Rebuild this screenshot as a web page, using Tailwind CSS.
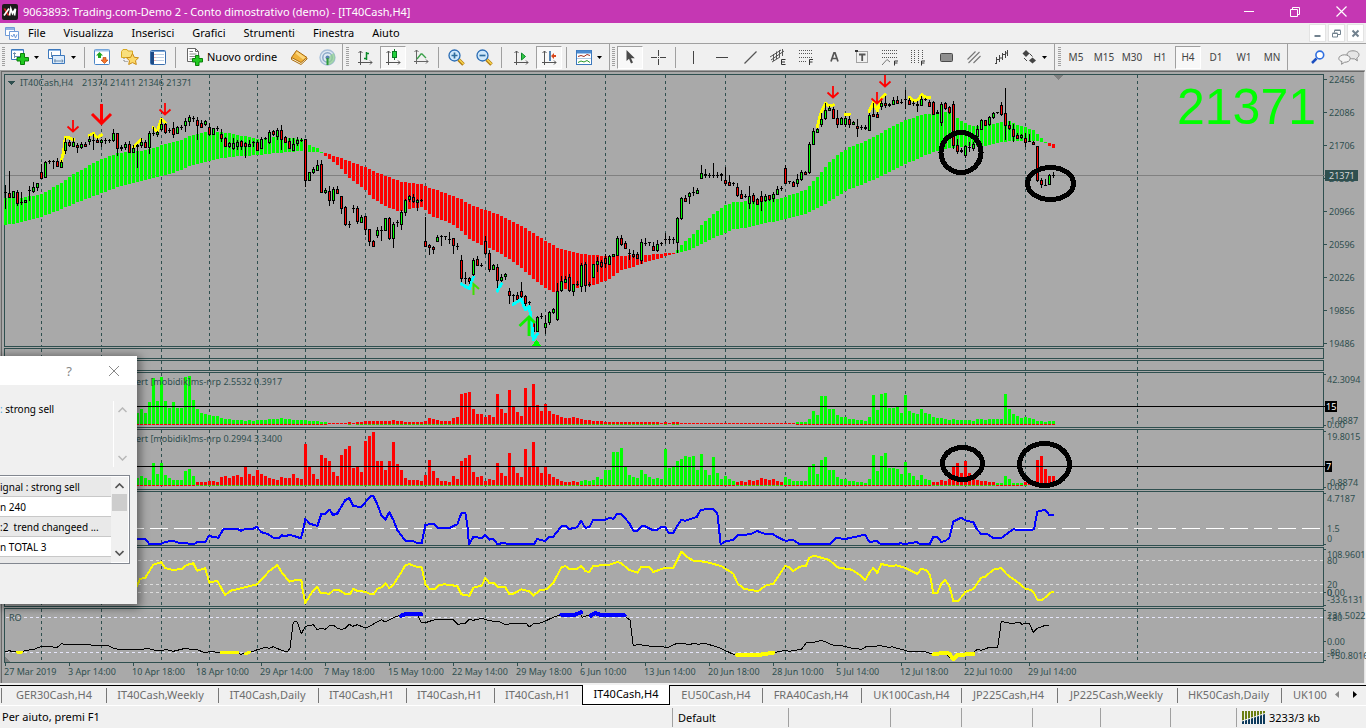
<!DOCTYPE html>
<html lang="it">
<head>
<meta charset="utf-8">
<title>9063893: Trading.com-Demo 2 - Conto dimostrativo (demo) - [IT40Cash,H4]</title>
<script src="https://cdn.jsdelivr.net/npm/@tailwindcss/browser@4"></script>
</head>
<body class="flex h-screen flex-col overflow-hidden bg-[#f0f0f0] font-['Noto_Sans','Open_Sans',sans-serif] text-[11px] leading-[16px] text-black">

<header class="flex h-[23px] shrink-0 items-center bg-[#c537b3] pl-[2px] text-white">
  <svg width="16" height="16" viewBox="0 0 16 16" aria-hidden="true"><rect width="16" height="16" rx="2" fill="#1b1b1b"/><path d="M1.500 4.500H3.500L7.500 11.500H5.500Z" fill="#e02020"/><path d="M7 4.500L2 11.500M7.500 11.500L8.800 4.800L10.500 9.500L13.500 4.800L12.500 11.500" stroke="#fff" stroke-width="1.700" fill="none"/></svg>
  <h1 class="ml-[5px] flex-1 whitespace-nowrap">9063893: Trading.com-Demo 2 - Conto dimostrativo (demo) - [IT40Cash,H4]</h1>
  <button aria-label="Riduci a icona" class="flex h-full w-[46px] items-center justify-center"><svg width="10" height="10" viewBox="0 0 10 10"><path d="M0 4.500H10" stroke="#fff"/></svg></button>
  <button aria-label="Ripristina" class="flex h-full w-[46px] items-center justify-center"><svg width="10" height="10" viewBox="0 0 10 10" fill="none" stroke="#fff"><path d="M.5 2.500H7.500V9.500H.5ZM2.500 2.500V.5H9.500V7.500H7.500"/></svg></button>
  <button aria-label="Chiudi" class="mr-[2px] flex h-full w-[46px] items-center justify-center"><svg width="11" height="11" viewBox="0 0 11 11"><path d="M.5 .5L10.500 10.500M10.500 .5L.5 10.500" stroke="#fff" stroke-width="1.200"/></svg></button>
</header>

<nav class="flex h-[20px] shrink-0 items-center pl-[5px]">
  <svg width="14" height="14" viewBox="0 0 14 14" aria-hidden="true" fill="#fff" stroke="#6f9bd8"><path d="M.5 1.500H9.500V9.500H.5Z"/><path d="M1 3H9" stroke-width="1.500"/><path d="M4.500 5.500H13.500V13.500H4.500Z"/><path d="M6 9L7.500 11L9 8L10.500 12L12 8.500" fill="none"/></svg>
  <button class="px-[9px]">File</button>
  <button class="px-[9px]">Visualizza</button>
  <button class="px-[9px]">Inserisci</button>
  <button class="px-[9px]">Grafici</button>
  <button class="px-[9px]">Strumenti</button>
  <button class="px-[9px]">Finestra</button>
  <button class="px-[9px]">Aiuto</button>
  <div class="ml-auto mr-[2px] flex gap-[2px]">
    <button aria-label="Riduci grafico" class="flex h-[18px] w-[17px] items-center justify-center border border-[#e3e3e3] bg-white"><svg width="9" height="9" viewBox="0 0 9 9"><path d="M1.500 7H7.500" stroke="#72828f" stroke-width="2"/></svg></button>
    <button aria-label="Ripristina grafico" class="flex h-[18px] w-[17px] items-center justify-center border border-[#e3e3e3] bg-white"><svg width="9" height="9" viewBox="0 0 9 9" fill="none" stroke="#72828f"><path d="M.5 4.500H5.500V8H.5ZM.5 4H5.500M2.500 3.500V1.500H8.500V5.500H6M2.500 1H8.500"/></svg></button>
    <button aria-label="Chiudi grafico" class="flex h-[18px] w-[17px] items-center justify-center border border-[#e3e3e3] bg-white"><svg width="9" height="9" viewBox="0 0 9 9"><path d="M1.500 1.500L7.500 7.500M7.500 1.500L1.500 7.500" stroke="#72828f" stroke-width="2"/></svg></button>
  </div>
</nav>

<div role="toolbar" aria-label="Strumenti" class="flex h-[27px] shrink-0 border-t border-[#a0a0a0]">
  <!-- standard -->
  <div class="flex h-full w-[343px] shrink-0 items-center border-r border-[#a0a0a0] pl-[2px]">
    <svg width="5" height="20" viewBox="0 0 5 20" aria-hidden="true"><path d="M1.500 0V20" stroke="#a0a0a0" stroke-width="3" stroke-dasharray="1 1"/></svg>
    <button aria-label="Nuovo grafico" class="flex w-[37px] items-center gap-[5px] pl-[4px]"><svg width="18" height="16" viewBox="0 0 18 16"><path d="M.5 .5H12.500V10.500H.5Z" fill="#fff" stroke="#3c78bc"/><path d="M1 1.500H12" stroke="#8ab6e6"/><path d="M3.500 4V9M2 5L3.500 3.500L5 5M3 7.500H10" stroke="#6a8cae" fill="none"/><path d="M9.500 4.500H13.500V8.500H17.500V12H13.500V15.500H9.500V12H6V8.500H9.500Z" fill="#1fc91f" stroke="#0a7f0a"/></svg><svg width="5" height="3" viewBox="0 0 5 3"><path d="M0 0H5L2.500 3Z"/></svg></button>
    <button aria-label="Profili" class="flex w-[37px] items-center gap-[5px] pl-[4px]"><svg width="18" height="16" viewBox="0 0 18 16"><path d="M.5 .5H12.500V9.500H.5Z" fill="#fff" stroke="#3c78bc"/><path d="M1 1.500H12" stroke="#8ab6e6"/><path d="M3.500 3V8M3 6.500H10" stroke="#6a8cae" fill="none"/><path d="M4.500 6.500H16.500V14.500H4.500Z" fill="#dcebfa" stroke="#3c78bc"/><path d="M6 12H15M7 10V13.500M14 10.500L15 12L14 13.500" stroke="#6a8cae" fill="none"/></svg><svg width="5" height="3" viewBox="0 0 5 3"><path d="M0 0H5L2.500 3Z"/></svg></button>
    <i class="mx-[3px] h-[21px] w-px bg-[#a0a0a0]"></i>
    <button aria-label="Market Watch" class="flex w-[28px] justify-center"><svg width="16" height="16" viewBox="0 0 16 16"><rect x=".5" y=".5" width="15" height="15" rx="1" fill="#fff" stroke="#4a86c8"/><path d="M1 1.500H15" stroke="#9cc3ea" stroke-width="2"/><path d="M5.500 3L9 6.500H7V9H4V6.500H2Z" fill="#1da51d"/><path d="M10.500 14.500L14 11H12V8.500H9V11H7Z" fill="#f4762c" stroke="#b33a00" stroke-width=".6"/></svg></button>
    <button aria-label="Navigatore" class="flex w-[28px] justify-center"><svg width="18" height="16" viewBox="0 0 18 16"><path d="M.5 2.500L2 .5H6L7 2H11.500V8.500H.5Z" fill="#f8df7c" stroke="#d8a820"/><path d="M3 9V12.500H7" stroke="#777" stroke-dasharray="1 1" fill="none"/><path d="M11.500 4.500L13.300 8.300L17.500 8.800L14.500 11.700L15.300 15.500L11.500 13.600L7.700 15.500L8.500 11.700L5.500 8.800L9.700 8.300Z" fill="#fbd96a" stroke="#c98a12"/></svg></button>
    <button aria-label="Terminale" class="flex w-[28px] justify-center"><svg width="16" height="15" viewBox="0 0 16 15"><rect x=".5" y=".5" width="15" height="14" rx="1" fill="#fff" stroke="#3a6fae"/><path d="M1 1.500H15" stroke="#7ba7d8"/><path d="M2.500 2V14" stroke="#1c4a86" stroke-width="3"/><path d="M6 4.500H14M6 7.500H14M6 10.500H14" stroke="#b9cde4"/><path d="M4.500 4.500H5.500M4.500 7.500H5.500M4.500 10.500H5.500" stroke="#d06060"/></svg></button>
    <i class="mx-[3px] h-[21px] w-px bg-[#a0a0a0]"></i>
    <button class="flex w-[106px] items-center gap-[3px] pl-[8px] whitespace-nowrap"><svg width="17" height="18" viewBox="0 0 17 18"><path d="M.5 .5H8.500L11.500 3.500V13.500H.5Z" fill="#fff" stroke="#666"/><path d="M8.500 .5V3.500H11.500" fill="none" stroke="#666"/><path d="M2.500 3.500H6M2.500 6H9.500M2.500 8.500H9.500M2.500 11H6" stroke="#888"/><path d="M8.500 7.500H12V10.500H15.500V14H12V17.500H8.500V14H5.500V10.500H8.500Z" fill="#1fc91f" stroke="#0a7f0a"/></svg><span>Nuovo ordine</span></button>
    <button aria-label="MetaEditor" class="flex w-[28px] justify-center"><svg width="17" height="15" viewBox="0 0 17 15"><path d="M.5 7.500V9.500L10 14.500L16 9V8" fill="#fff3cf" stroke="#a86a10"/><path d="M5.500 .5L16 7.500L10 12.500L.5 7.500Z" fill="#f0b23a" stroke="#a86a10"/><path d="M6 1.500L14.500 7.500L12 9.500L4.500 3.500Z" fill="#fbd67c"/></svg></button>
    <button aria-label="Segnali" class="flex w-[28px] justify-center"><svg width="17" height="17" viewBox="0 0 17 17" fill="none"><circle cx="8.500" cy="8.500" r="8" fill="#dfe9f3"/><circle cx="8.500" cy="8.500" r="7.500" stroke="#a8bfd8" stroke-width="1.300"/><circle cx="8.500" cy="8.500" r="4.700" stroke="#8aa8c8" stroke-width="1.500"/><path d="M8.500 8.500L14.500 4A7.500 7.500 0 0 1 8.500 16Z" fill="#8fd08f" opacity=".7"/><circle cx="8.500" cy="8.500" r="2" fill="#5a82b0"/><path d="M8.500 9V16" stroke="#2f9a3a" stroke-width="2"/></svg></button>
  </div>
  <!-- charts -->
  <div class="flex h-full w-[267px] shrink-0 items-center border-r border-[#a0a0a0] pl-[3px]">
    <svg width="5" height="20" viewBox="0 0 5 20" aria-hidden="true"><path d="M1.500 0V20" stroke="#a0a0a0" stroke-width="3" stroke-dasharray="1 1"/></svg>
    <button aria-label="Grafico a barre" class="flex w-[28px] justify-center"><svg width="15" height="15" viewBox="0 0 15 15" fill="none"><path d="M2.500 1V15M0 12.500H14M.5 3L2.500 1L4.500 3M12 10.500L14 12.500L12 14.500" stroke="#555"/><path d="M8.500 2V10M8.500 3.500H11M6 8.500H8.500" stroke="#0a8a2a" stroke-width="1.500"/></svg></button>
    <button aria-label="Candele" aria-pressed="true" class="mx-[1px] flex h-[23px] w-[26px] items-center justify-center border border-t-[#a0a0a0] border-r-white border-b-white border-l-[#a0a0a0] bg-[#f8f8f8]"><svg width="15" height="16" viewBox="0 0 15 16" fill="none"><path d="M2.500 2V16M0 13.500H14M.5 4L2.500 2L4.500 4M12 11.500L14 13.500L12 15.500" stroke="#555"/><path d="M8.500 0V11" stroke="#0a7a22"/><rect x="6.500" y="2.500" width="4" height="6" fill="#22d13c" stroke="#0a7a22"/></svg></button>
    <button aria-label="Linea" class="flex w-[28px] justify-center"><svg width="15" height="14" viewBox="0 0 15 14" fill="none"><path d="M2.500 0V14M0 11.500H14M.5 2L2.500 0L4.500 2M12 9.500L14 11.500L12 13.500" stroke="#666"/><path d="M3 9L7 4H8L12 8" stroke="#38a048" stroke-width="1.300"/></svg></button>
    <i class="mx-[3px] h-[21px] w-px bg-[#a0a0a0]"></i>
    <button aria-label="Zoom avanti" class="flex w-[28px] justify-center"><svg width="17" height="17" viewBox="0 0 17 17"><path d="M10.500 10.500L15.500 15.500" stroke="#b07a10" stroke-width="3.500"/><path d="M10.500 10L15.500 15" stroke="#f7d24a" stroke-width="1.700"/><circle cx="6.500" cy="6.500" r="5.500" fill="#cfe8fb" stroke="#2a6cb4" stroke-width="1.300"/><path d="M3.500 6.500H9.500M6.500 3.500V9.500" stroke="#2f6d9e" stroke-width="1.700"/></svg></button>
    <button aria-label="Zoom indietro" class="flex w-[28px] justify-center"><svg width="17" height="17" viewBox="0 0 17 17"><path d="M10.500 10.500L15.500 15.500" stroke="#b07a10" stroke-width="3.500"/><path d="M10.500 10L15.500 15" stroke="#f7d24a" stroke-width="1.700"/><circle cx="6.500" cy="6.500" r="5.500" fill="#cfe8fb" stroke="#2a6cb4" stroke-width="1.300"/><path d="M3.500 6.500H9.500" stroke="#2f6d9e" stroke-width="1.700"/></svg></button>
    <i class="mx-[3px] h-[21px] w-px bg-[#a0a0a0]"></i>
    <button aria-label="Scorrimento automatico" class="ml-[2px] flex w-[28px] justify-center"><svg width="15" height="15" viewBox="0 0 15 15" fill="none"><path d="M2.500 1V15M0 12.500H14M.5 3L2.500 1L4.500 3M12 10.500L14 12.500L12 14.500" stroke="#555"/><path d="M7.500 3L11.500 6.500L7.500 10Z" fill="#35c845" stroke="#0a8a2a"/></svg></button>
    <button aria-label="Sposta grafico" aria-pressed="true" class="mx-[1px] flex h-[23px] w-[26px] items-center justify-center border border-t-[#a0a0a0] border-r-white border-b-white border-l-[#a0a0a0] bg-[#f8f8f8]"><svg width="15" height="15" viewBox="0 0 15 15" fill="none"><path d="M2.500 1V15M0 12.500H14M.5 3L2.500 1L4.500 3M12 10.500L14 12.500L12 14.500" stroke="#555"/><path d="M8 1V11" stroke="#1c5c9c" stroke-width="1.500"/><path d="M9 6L12 3V5H14V7H12V9Z" fill="#d8481c"/></svg></button>
    <i class="mx-[3px] h-[21px] w-px bg-[#a0a0a0]"></i>
    <button aria-label="Modelli" class="ml-[1px] flex w-[34px] items-center gap-[5px] pl-[5px]"><svg width="16" height="15" viewBox="0 0 16 15" fill="none"><rect x=".5" y=".5" width="15" height="14" fill="#fff" stroke="#3c78bc"/><path d="M1 2H15" stroke="#4a8ad0" stroke-width="3"/><path d="M1 8.500H15" stroke="#b0c8e0"/><path d="M2 6.500L5 5.500L8 6.500L11 4.500L14 5.500" stroke="#a03020"/><path d="M2 12.500L5 11L8 12L11 10.500L14 12.500" stroke="#2a9a2a"/></svg><svg width="5" height="3" viewBox="0 0 5 3"><path d="M0 0H5L2.500 3Z"/></svg></button>
  </div>
  <!-- line studies -->
  <div class="flex h-full w-[445px] shrink-0 items-center border-r border-[#a0a0a0] pl-[2px]">
    <svg width="4" height="20" viewBox="0 0 4 20" aria-hidden="true"><path d="M1.500 0V20" stroke="#a0a0a0" stroke-width="3" stroke-dasharray="1 1"/></svg>
    <button aria-label="Cursore" aria-pressed="true" class="mx-[1px] flex h-[23px] w-[26px] items-center justify-center border border-t-[#a0a0a0] border-r-white border-b-white border-l-[#a0a0a0] bg-[#f8f8f8]"><svg width="9" height="14" viewBox="0 0 9 14"><path d="M.5 0V11L3 8.800L5 13.500L7 12.500L5 8.200H8.800Z" fill="#4a4a4a"/></svg></button>
    <button aria-label="Mirino" class="flex w-[28px] justify-center"><svg width="15" height="15" viewBox="0 0 15 15"><path d="M7.500 0V6M7.500 9V15M0 7.500H6M9 7.500H15M7 7.500H8" stroke="#444"/></svg></button>
    <i class="mx-[3px] h-[21px] w-px bg-[#a0a0a0]"></i>
    <button aria-label="Linea verticale" class="flex w-[29px] justify-center"><svg width="13" height="13" viewBox="0 0 13 13"><path d="M6.500 0V13" stroke="#444"/></svg></button>
    <button aria-label="Linea orizzontale" class="flex w-[28px] justify-center"><svg width="13" height="13" viewBox="0 0 13 13"><path d="M0 6.500H12" stroke="#444"/></svg></button>
    <button aria-label="Trendline" class="flex w-[28px] justify-center"><svg width="13" height="13" viewBox="0 0 13 13"><path d="M.5 12.500L12.500 .5" stroke="#555" stroke-width="1.200"/></svg></button>
    <button aria-label="Canale equidistante" class="flex w-[28px] justify-center"><svg width="16" height="16" viewBox="0 0 16 16" fill="none" stroke="#555"><path d="M0 8L11 1M1 11L14 2M2 13L10 8M3.500 5V12M6.500 2.500V10M9.500 1V8M12.500 0V7"/><path d="M15.500 10.500H11.500V15.500H15.500M11.500 13H15" stroke="#333"/></svg></button>
    <button aria-label="Fibonacci" class="flex w-[28px] justify-center"><svg width="16" height="17" viewBox="0 0 16 17" fill="none" stroke="#555"><path d="M1 1.500H14M1 4.500H14M1 8.500H14M1 12.500H9" stroke-dasharray="1 1"/><path d="M11.500 16V10.500H15M11.500 13H14.500" stroke="#333"/></svg></button>
    <button aria-label="Testo" class="flex w-[28px] justify-center"><svg width="9" height="10" viewBox="0 0 9 10" fill="none"><path d="M1 9.500L4 .8H5L8 9.500M2.200 6.500H6.800" stroke="#555" stroke-width="1.700"/></svg></button>
    <button aria-label="Etichetta" class="flex w-[28px] justify-center"><svg width="14" height="14" viewBox="0 0 14 14" fill="none"><rect x="1.500" y="1.500" width="11" height="11" stroke="#555" stroke-dasharray="1 1"/><path d="M0 1H3" stroke="#333" stroke-width="2"/><path d="M4 4.500H10.500M7.200 4.500V11" stroke="#555" stroke-width="1.800"/></svg></button>
    <button aria-label="Fibonacci esteso" class="flex w-[28px] justify-center"><svg width="16" height="17" viewBox="0 0 16 17" fill="none" stroke="#555"><path d="M0 1.500H16M0 4.500H16M0 8.500H16" stroke-dasharray="1 1"/><path d="M0 16L5 10.500L8 13" stroke="#777"/><path d="M12.500 16.500V12H16M12.500 14H15.500" stroke="#333"/></svg></button>
    <button aria-label="Fuso orario Fibonacci" class="flex w-[28px] justify-center"><svg width="16" height="17" viewBox="0 0 16 17" fill="none" stroke="#555"><path d="M1.500 1V14M4.500 1V14M8.500 1V14M12.500 1V10" stroke-dasharray="1 1"/><path d="M11.500 16.500V12H15M11.500 14H14.500" stroke="#333"/></svg></button>
    <button aria-label="Rettangolo" class="flex w-[28px] justify-center"><svg width="13" height="9" viewBox="0 0 13 9"><rect x=".5" y=".5" width="12" height="8" rx="1" fill="#8f8f8f" stroke="#4a4a4a"/></svg></button>
    <button aria-label="Canale" class="flex w-[28px] justify-center"><svg width="14" height="13" viewBox="0 0 14 13"><path d="M.5 8.500L8.500 .5M1.500 12L12.500 1M6.500 12L13.500 5" stroke="#777" stroke-width="1.100"/></svg></button>
    <button aria-label="Onde" class="flex w-[28px] justify-center"><svg width="14" height="15" viewBox="0 0 14 15" fill="none"><path d="M1.500 7V14M0 13.500H2M4.500 5V12M2 9.500H4M7.500 3V10M5 8H7M10.500 1V8M8 4.500H10M12.500 0V6M11 3H13" stroke="#444"/></svg></button>
    <button aria-label="Frecce" class="flex w-[33px] items-center gap-[5px] pl-[6px]"><svg width="15" height="14" viewBox="0 0 15 14"><path d="M4 0L7.500 3.500L4 7L.5 3.500Z" fill="#444"/><path d="M10.500 7.500L14 10.500L10.500 13.500L7 10.500Z" fill="#444"/><path d="M2 8L5 11M7.500 3.500L10.500 6.500" stroke="#444"/></svg><svg width="5" height="3" viewBox="0 0 5 3"><path d="M0 0H5L2.500 3Z"/></svg></button>
  </div>
  <!-- periods -->
  <div class="flex h-full w-[233px] shrink-0 items-center border-r border-[#a0a0a0] pl-[3px] text-[10px] text-[#444]">
    <svg width="4" height="20" viewBox="0 0 4 20" aria-hidden="true"><path d="M1.500 0V20" stroke="#a0a0a0" stroke-width="3" stroke-dasharray="1 1"/></svg>
    <button class="w-[28px]">M5</button><button class="w-[28px]">M15</button><button class="w-[28px]">M30</button><button class="w-[28px]">H1</button>
    <button aria-pressed="true" class="mx-[1px] h-[23px] w-[26px] border border-t-[#a0a0a0] border-r-white border-b-white border-l-[#a0a0a0] bg-[#f8f8f8]">H4</button>
    <button class="w-[28px]">D1</button><button class="w-[28px]">W1</button><button class="w-[28px]">MN</button>
  </div>
  <div class="ml-auto flex items-center gap-[13px] pr-[6px]">
    <button aria-label="Cerca"><svg width="14" height="14" viewBox="0 0 14 14" fill="none"><path d="M5.500 8.500L1 13" stroke="#1c4fc0" stroke-width="2.500"/><circle cx="8.800" cy="5" r="3.900" fill="#fff" stroke="#2f6fe0" stroke-width="1.600"/></svg></button>
    <button aria-label="Chat"><svg width="22" height="15" viewBox="0 0 22 15"><path d="M15 .8c3.500 0 6 1.800 6 4 0 1.500-1 2.500-2.200 3.200l.6 2.800-3-2c-4 .4-7.400-1.400-7.400-4s2.500-4 6-4Z" fill="#e6e6e6" stroke="#8c8c8c"/><path d="M6.500 4.800c3.300 0 5.700 1.700 5.700 3.800s-2.400 3.700-5.700 3.700l-3 2 .5-2.700C2 10.900.8 9.900.8 8.600c0-2.100 2.400-3.800 5.700-3.800Z" fill="#f4f4f4" stroke="#8c8c8c"/></svg></button>
  </div>
</div>

<main class="relative min-h-0 flex-1 bg-[#a9a9a9]">
  <svg id="chart" class="block h-full w-full font-['Noto_Sans','Open_Sans',sans-serif] text-[9px]" viewBox="0 70 1366 613" preserveAspectRatio="xMinYMin meet" shape-rendering="crispEdges" role="img" aria-label="Grafico IT40Cash,H4"></svg>

  <section role="dialog" aria-label="Avvisi" class="absolute top-[286px] left-0 h-[248px] w-[137px] bg-[#f0f0f0] text-[10px] shadow-[1px_2px_9px_2px_rgba(0,0,0,0.45)]">
    <div class="flex h-[29px] items-center justify-end gap-[36px] bg-white pr-[17px]">
      <button aria-label="Guida" class="text-[13px] text-[#888]">?</button>
      <button aria-label="Chiudi avviso"><svg width="12" height="12" viewBox="0 0 12 12"><path d="M1 1L11 11M11 1L1 11" stroke="#888"/></svg></button>
    </div>
    <div class="mt-[16px] flex h-[66px]">
      <p class="w-[113px] whitespace-nowrap"><span class="text-[#4aa0d8]">:</span> strong sell</p>
      <div class="flex w-[17px] flex-col items-center justify-between border-l border-white py-[6px]">
        <svg width="9" height="6" viewBox="0 0 9 6"><path d="M.5 5L4.500 1L8.500 5" fill="none" stroke="#b8b8b8" stroke-width="1.500"/></svg>
        <svg width="9" height="6" viewBox="0 0 9 6"><path d="M.5 1L4.500 5L8.500 1" fill="none" stroke="#b8b8b8" stroke-width="1.500"/></svg>
      </div>
    </div>
    <div class="mt-[8px] flex h-[89px] w-[130px] overflow-hidden border-y border-r border-[#828790] bg-white p-px pl-0">
      <ul class="flex-1 whitespace-nowrap leading-[20px]">
        <li class="h-[20px] border-b border-[#c8c8c8] bg-[#e9e9e9]">ignal : strong sell</li>
        <li class="h-[20px] border-b border-[#c8c8c8]">n 240</li>
        <li class="h-[20px] border-b border-[#c8c8c8] bg-[#e9e9e9] whitespace-pre">:2  trend changeed ...</li>
        <li class="h-[20px] border-b border-[#c8c8c8]">n TOTAL 3</li>
        <li class="h-[6px] bg-[#e9e9e9]"></li>
      </ul>
      <div class="flex w-[17px] flex-col items-center bg-[#f0f0f0] py-[6px]">
        <svg width="9" height="6" viewBox="0 0 9 6"><path d="M.5 5L4.500 1L8.500 5" fill="none" stroke="#555" stroke-width="1.700"/></svg>
        <div class="mt-[5px] h-[17px] w-[15px] bg-[#cdcdcd]"></div>
        <svg class="mt-auto" width="9" height="6" viewBox="0 0 9 6"><path d="M.5 1L4.500 5L8.500 1" fill="none" stroke="#555" stroke-width="1.700"/></svg>
      </div>
    </div>
  </section>
</main>

<div role="tablist" class="mt-[2px] flex h-[20px] shrink-0 border-t border-black pl-px leading-[14px] text-[#6d6d6d] [&>button]:shrink-0 [&>button]:pb-[2px] [&>button]:whitespace-nowrap">
  <i class="my-[2px] w-px bg-[#777]"></i>
  <button role="tab" class="w-[104px]">GER30Cash,H4</button><i class="my-[2px] w-px bg-[#777]"></i>
  <button role="tab" class="w-[111px] pr-[4px]">IT40Cash,Weekly</button><i class="my-[2px] w-px bg-[#777]"></i>
  <button role="tab" class="w-[99px] pr-[2px]">IT40Cash,Daily</button><i class="my-[2px] w-px bg-[#777]"></i>
  <button role="tab" class="w-[87px] pr-[2px]">IT40Cash,H1</button><i class="my-[2px] w-px bg-[#777]"></i>
  <button role="tab" class="w-[87px] pr-[2px]">IT40Cash,H1</button><i class="my-[2px] w-px bg-[#777]"></i>
  <button role="tab" class="w-[87px] pr-[2px]">IT40Cash,H1</button>
  <button role="tab" aria-selected="true" class="-mt-px h-[20px] w-[88px] border-x border-b border-black bg-white text-black">IT40Cash,H4</button>
  <button role="tab" class="w-[92px]">EU50Cash,H4</button><i class="my-[2px] w-px bg-[#777]"></i>
  <button role="tab" class="w-[98px] pr-[2px]">FRA40Cash,H4</button><i class="my-[2px] w-px bg-[#777]"></i>
  <button role="tab" class="w-[99px]">UK100Cash,H4</button><i class="my-[2px] w-px bg-[#777]"></i>
  <button role="tab" class="w-[95px] pr-[2px]">JP225Cash,H4</button><i class="my-[2px] w-px bg-[#777]"></i>
  <button role="tab" class="w-[119px] pr-[2px]">JP225Cash,Weekly</button><i class="my-[2px] w-px bg-[#777]"></i>
  <button role="tab" class="w-[103px] pr-[2px]">HK50Cash,Daily</button><i class="my-[2px] w-px bg-[#777]"></i>
  <button role="tab" class="pl-[11px]">UK100</button>
  <div class="ml-auto flex items-center gap-[14px] pr-[9px] pb-[2px]">
    <button aria-label="Schede precedenti"><svg width="4" height="7" viewBox="0 0 4 7"><path d="M4 0V7L0 3.500Z" fill="#888"/></svg></button>
    <button aria-label="Schede successive"><svg width="4" height="7" viewBox="0 0 4 7"><path d="M0 0V7L4 3.500Z"/></svg></button>
  </div>
</div>

<footer class="flex h-[23px] shrink-0 items-center border-t border-white [&>*]:shrink-0">
  <span class="w-[672px] pl-[2px]">Per aiuto, premi F1</span>
  <span class="w-[116px] border-l border-[#a0a0a0] pl-[5px] leading-[19px]">Default</span>
  <i class="h-[19px] w-[102px] border-l border-[#a0a0a0]"></i>
  <i class="h-[19px] w-[71px] border-l border-[#a0a0a0]"></i>
  <i class="h-[19px] w-[71px] border-l border-[#a0a0a0]"></i>
  <i class="h-[19px] w-[68px] border-l border-[#a0a0a0]"></i>
  <i class="h-[19px] w-[70px] border-l border-[#a0a0a0]"></i>
  <i class="h-[19px] w-[66px] border-l border-[#a0a0a0]"></i>
  <span class="flex items-center gap-[4px] border-l border-[#a0a0a0] pl-[5px] leading-[19px]">
    <svg width="23" height="13" viewBox="0 0 23 13" aria-hidden="true"><path d="M1 0V13M4 0V13M7 0V13M10 0V13M13 0V13M16 0V13M19 0V13M22 0V13" stroke="#6b7f12" stroke-width="2"/><path d="M1 10V13M4 9V13M7 8V13M10 7V13M13 6V13M16 5V13M19 4V13M22 3V13" stroke="#0d3a5c" stroke-width="2"/><path d="M0 10L23 2.500" stroke="#f0f0f0"/></svg>
    3233/3 kb
  </span>
</footer>

<script>
const svg = document.getElementById('chart');
const NS = 'http://www.w3.org/2000/svg';
function el(name, attrs, text) {
  const e = document.createElementNS(NS, name);
  for (const k in attrs) e.setAttribute(k, attrs[k]);
  if (text !== undefined) e.textContent = text;
  svg.appendChild(e);
  return e;
}
const rect = (x, y, w, h, fill) => el('rect', {x, y, width: w, height: h, fill});
const label = (x, y, s, fill) => el('text', {x, y: y + 3, fill: fill || '#2f4f4f', style: 'white-space:pre'}, s);
const INK = '#2f4f4f', LIME = '#00ff00', RED = '#ff0000';
const X = i => 5 + 4 * i;

// window frame
rect(0, 70, 1366, 1, '#a0a0a0'); rect(0, 71, 1364, 1, '#696969');
rect(0, 70, 1, 613, '#a0a0a0'); rect(1, 71, 1, 612, '#696969');
rect(1364, 72, 1, 611, '#e3e3e3'); rect(1365, 70, 1, 613, '#f0f0f0');

// panels and session grid
[[74,346],[348,358],[360,370],[372,427],[429,489],[491,545],[547,606],[608,662]].forEach(([a, b]) => {
  [41,101,161,209,257,305,365,425,485,545,605,665,725,785,845,905,965,1025,1137].forEach(x =>
    el('path', {d: `M${x + .5} ${a + 1}V${b}`, stroke: INK, 'stroke-dasharray': '3 3', fill: 'none'}));
  el('rect', {x: 4.5, y: a + .5, width: 1319, height: b - a, fill: 'none', stroke: INK});
});
[[528.5, '#fff', '18 6'], [560.5, '#dcdcdc', '3 3'], [584.5, '#dcdcdc', '3 3'], [592.5, '#dcdcdc', '3 3'], [617.5, '#e6e6fa', '3 3'], [652.5, '#e6e6fa', '3 3']].forEach(([y, c, d]) =>
  el('path', {d: `M6 ${y}H1323`, stroke: c, 'stroke-dasharray': d}));
label(20, 83, 'IT40Cash,H4'); label(82, 83, '21374 21411 21346 21371');
el('path', {d: 'M8 81H15L11.500 85Z', fill: INK});
el('path', {d: 'M1053 75H1063L1058 80Z', fill: '#808080'});
el('path', {d: 'M5 657V662H10Z', fill: '#808080'});
rect(5, 175, 1320, 1, '#808080');

// trend bands: [x, top, bottom] knots
function band(color, knots) {
  for (let k = 0; k < knots.length; k++) {
    const a = knots[k], b = knots[k + 1] || [a[0] + 4, a[1], a[2]];
    for (let x = a[0]; x < b[0]; x += 4) {
      const t = (x - a[0]) / (b[0] - a[0]);
      const y1 = Math.round(a[1] + t * (b[1] - a[1])), y2 = Math.round(a[2] + t * (b[2] - a[2]));
      rect(x - 1, y1, 3, Math.max(1, y2 - y1), color);
    }
  }
}
band(LIME, [[5,198,225],[21,198,222],[41,194,217],[61,183,209],[73,174,204],[101,159,193],[117,153,187],[141,151,181],[153,148,178],[165,144,175],[181,140,170],[189,136,166],[205,132,162],[221,132,158],[229,133,157],[257,139,155],[277,137,153],[301,139,151],[305,139,151],[309,145,152],[317,148,152],[321,152,153]]);
band(RED, [[325,153,156],[329,154,159],[333,156,162],[337,157,165],[341,158,169],[349,161,178],[357,164,184],[365,167,190],[373,171,199],[385,176,206],[397,180,211],[401,182,211],[413,183,208],[421,184,207],[425,186,210],[433,189,217],[445,193,221],[453,196,225],[461,199,231],[469,204,239],[481,209,245],[489,211,248],[501,216,254],[513,222,262],[521,226,268],[533,233,279],[545,241,288],[553,245,292],[557,248,291],[565,250,289],[581,254,287],[593,255,285],[609,256,279],[621,256,270],[633,255,267],[645,255,262],[657,254,259],[669,253,255],[673,253,254]]);
band(LIME, [[677,250,253],[681,245,252],[685,241,251],[693,234,248],[701,225,244],[713,214,238],[725,205,233],[733,202,229],[749,201,227],[761,201,224],[781,198,220],[793,194,217],[805,190,214],[813,181,210],[821,172,206],[829,162,201],[837,155,196],[849,147,189],[865,141,183],[877,135,178],[889,128,172],[905,120,164],[921,115,157],[933,113,152],[949,111,148],[957,118,147],[961,121,147],[969,125,146],[981,127,146],[989,125,145],[1001,122,142],[1009,121,141],[1017,125,141],[1025,127,141],[1033,130,141],[1037,134,141],[1041,138,142],[1045,142,143]]);
band(RED, [[1049,143,146],[1053,144,148]]);

// polylines are stored on a grid of thirds of a pixel from (bx, by)
function line(color, w, bx, by, pts) {
  const d = pts.trim().split(/\s+/).map(p => { const [a, b] = p.split(',').map(Number); return (bx + a / 3).toFixed(1) + ',' + (by + b / 3).toFixed(1); }).join(' ');
  el('polyline', {points: d, fill: 'none', stroke: color, 'stroke-width': w, 'stroke-linejoin': 'round', 'stroke-linecap': w > 1 ? 'round' : 'butt'});
}
const YEL = '#ffff00';
['184,272 190,250 196,203 208,203 214,207 222,209','268,196 280,190 292,204 304,195','400,231 412,220 424,208','460,173 472,184 484,148 496,157'].forEach(s => line(YEL, 3, 0, 70, s));
['472,170 484,125 496,100 508,108 520,105','556,133 570,132','628,124 640,98 652,122 664,84 676,73','748,82 760,92 774,90 786,73 796,82 810,82'].forEach(s => line(YEL, 3, 660, 70, s));

// candles: high, body top, body bottom, low, kind (g rise, r fall, d doji), thirds of a pixel below y0
function candles(first, y0, data) {
  data.trim().split(';').forEach((row, k) => {
    const [h, t, b, l, c] = row.trim().split(' ');
    const y = v => Math.floor(y0 + v / 3), x = X(first + k);
    rect(x, y(h), 1, Math.max(1, y(l) - y(h)), '#000');
    if (c === 'd') rect(x - 1, y(t), 3, y(b) - y(t) > 1 ? 2 : 1, '#000');
    else {
      const H = Math.max(3, y(b) - y(t) + 1);
      rect(x - 1, y(t), 3, H, '#000');
      rect(x, y(t) + 1, 1, H - 2, c === 'g' ? LIME : RED);
    }
  });
}
candles(0, 70, `345 368 371 417 d;303 369 381 385 r;364 364 382 384 g;360 368 401 410 r;366 396 400 405 d;391 391 398 398 g;349 360 362 395 d;338 351 364 370 g;340 340 353 364 g;284 306 325 325 r;273 276 322 322 g;272 273 277 283 d;271 273 276 298 d;264 275 290 291 r;270 277 292 293 g;204 216 241 252 g;210 216 227 232 r;206 217 230 230 g;220 225 232 251 r;218 222 232 238 g;218 222 230 232 r;200 207 215 225 g;194 210 213 240 d;204 210 217 220 r;207 211 218 232 g;206 212 215 222 d;208 210 213 220 d;178 190 211 217 g;190 190 235 258 r;226 232 237 244 d;216 223 233 240 g;214 222 247 250 r;226 235 247 249 g;222 226 232 294 d;206 216 226 236 g;212 217 232 234 r;184 189 233 252 g;172 190 193 198 d;183 188 194 203 g;148 163 178 184 g;160 163 188 192 r;174 180 183 190 d;157 176 192 204 r;168 172 190 192 g;166 171 175 180 d;144 154 167 188 g;135 142 154 170 g;138 144 147 158 d;141 150 167 210 r;150 160 172 172 r;150 154 162 168 g;160 172 192 198 r;174 175 193 193 g;168 176 179 184 d;178 192 206 218 r;202 204 230 232 r;216 220 230 236 g;206 220 236 240 g;210 216 228 240 g;212 214 228 240 r;218 221 230 264 r;210 222 230 232 g;214 218 221 232 d;212 218 240 244 r;202 207 234 236 g;202 206 209 212 d;182 188 217 222 g;180 185 192 198 r;176 182 198 210 g;165 182 207 240 r;198 203 217 220 r;206 215 234 236 r;206 222 240 243 g;202 212 220 228 g;206 211 214 218 d;208 209 332 352 r;306 308 332 334 g;292 298 307 314 g;272 287 300 304 g;272 283 368 368 r;356 362 366 374 g;348 363 392 410 r;351 357 392 404 g;350 357 369 372 r`);
candles(84, 140, `168 170 204 224 r;198 202 254 260 r;244 252 257 266 d;196 205 208 220 d;198 205 245 252 r;226 232 247 250 g;228 229 268 287 r;268 268 304 320 r;300 304 318 320 r;262 271 287 296 g;260 270 273 303 d;234 235 271 274 g;232 236 296 302 r;246 253 296 326 g;240 246 250 262 d;212 217 254 270 g;178 180 217 230 g;165 168 179 188 g;162 171 184 190 r;178 181 187 215 g;177 180 183 188 d;232 304 319 320 r;312 316 323 347 r;319 322 328 342 r;285 291 305 307 g;285 288 291 318 d;288 290 293 300 d;276 297 300 314 d;294 295 317 342 r;309 318 321 332 d;345 361 416 430 r;396 414 418 432 d;412 415 425 445 r;354 361 403 410 g;349 358 377 378 r;370 375 377 382 d;290 304 341 346 r;330 339 388 398 r;372 375 388 392 g;372 382 420 450 r;402 411 421 428 g;399 403 409 422 g;444 454 467 494 r;462 466 470 492 d;456 466 479 482 r;426 454 470 482 r;465 469 491 508 r;483 487 491 498 d;546 547 575 600 r;528 532 575 578 g;519 528 532 537 d;526 549 563 584 g;514 516 548 556 g;505 508 518 522 g;430 454 537 543 g;408 424 452 458 g;410 418 426 430 g;403 412 452 456 r;432 433 455 468 g;424 432 435 440 d;370 376 438 456 g;366 372 437 456 r;427 433 437 442 d;372 373 413 414 g;352 363 374 396 g;362 366 379 384 r;344 354 370 384 r;346 348 373 376 g;342 343 349 352 g;288 294 346 348 g;285 294 312 318 r;304 309 324 324 r;327 341 344 362 d;330 342 345 354 r;338 342 354 358 r;297 307 360 372 g;296 309 312 318 d;306 307 310 318 d;306 318 331 332 r;300 313 330 336 g;308 309 312 318 d;279 297 301 312 d;290 298 301 314 d;292 297 300 312 d`);
candles(168, 70, `442 445 518 550 g;382 384 446 452 g;376 384 393 396 r;366 370 380 402 g;352 367 371 378 d;354 360 369 370 g;285 309 324 327 g;297 314 318 324 d;309 315 318 324 d;279 315 320 326 d;306 316 319 326 d;309 314 318 333 d;291 330 339 348 r;316 336 345 348 r;337 339 343 348 d;340 351 375 382 r;360 374 384 388 r;374 380 383 386 d;350 378 399 417 g;369 376 393 402 r;384 388 402 404 r;364 378 393 423 r;373 378 391 396 g;375 376 388 394 r;366 373 384 398 g;350 357 374 376 g;348 354 357 364 d;285 294 339 344 r;333 334 338 342 d;333 336 348 352 r;312 327 339 352 g;300 306 329 334 g;303 306 314 314 r;216 223 308 312 g;174 184 224 226 g;174 178 186 190 g;130 148 164 172 g;100 122 146 150 g;110 114 122 124 g;112 117 146 148 r;122 145 162 174 r;142 145 162 164 g;140 146 163 172 g;138 147 164 176 r;153 156 164 166 g;147 170 174 201 r;166 171 174 180 d;165 172 178 180 d;130 135 182 184 g;100 132 139 140 r;126 132 143 144 r;90 99 109 120 g;78 99 107 114 r;99 104 108 111 d;82 92 103 106 g;78 92 101 104 r;87 97 101 102 d;60 87 91 119 d;84 90 103 106 r;95 100 103 108 d;93 104 108 128 d;78 87 107 108 g;84 88 92 94 d;90 97 108 109 r;94 97 134 136 r;122 128 132 134 d;96 102 158 170 g;98 100 114 120 r;110 112 128 132 r;93 102 226 238 r;207 225 245 252 r;234 242 248 250 d;226 229 256 266 g;216 231 235 248 d;216 222 236 244 g;166 178 200 204 g;147 151 178 180 g;150 151 165 168 r;140 142 164 170 g;126 130 142 148 g;126 127 131 134 d;98 106 133 138 r;55 130 166 212 r;153 166 176 180 r;163 178 199 216 r;190 196 206 208 r;192 196 203 208 g;190 205 217 232 r;192 214 218 218 d;213 217 224 227 r;229 230 331 336 r;324 331 344 356 r;328 345 347 347 d;312 315 342 346 g;306 315 318 324 d`);

['424,432 448,446 460,412','532,453 544,432','580,493 604,478 616,510 628,500 634,540 640,600 652,582'].forEach(s => line('#00ffff', 3, 320, 140, s));
// signal arrows
[[73,120,132],[165,103,115],[833,86,98],[877,92,104],[885,75,87]].forEach(([x, a, b]) =>
  el('path', {d: `M${x} ${a}V${b}M${x - 5.500} ${b - 5.500}L${x} ${b - .5}L${x + 5.500} ${b - 5.500}`, stroke: RED, 'stroke-width': 1.800, fill: 'none', 'shape-rendering': 'auto'}));
el('path', {d: 'M101.500 104V124M92 114L101.500 123.500L111 114', stroke: RED, 'stroke-width': 3, fill: 'none', 'shape-rendering': 'auto'});
el('path', {d: 'M473.500 295V284L479 289', stroke: '#40e000', 'stroke-width': 2, fill: 'none', 'shape-rendering': 'auto'});
el('path', {d: 'M529 336V317M519.500 326L529 317L535 323', stroke: '#10f000', 'stroke-width': 2.800, fill: 'none', 'shape-rendering': 'auto'});
el('path', {d: 'M536.500 340L541.500 346H531.500Z', fill: LIME});
el('text', {x: 1177, y: 124, fill: LIME, style: "font:50px 'Liberation Sans',Arial,sans-serif"}, '21371');

// histograms: bar heights in thirds of a pixel; runs of [first bar, colour, heights]
function hist(base, runs) {
  runs.forEach(([i, color, hs]) => hs.split(' ').forEach((h, k) => {
    const H = Math.max(1, Math.round(h / 3));
    rect(X(i + k) - 1, base - H, 3, H, color);
    if (color === LIME) rect(X(i + k) - 1, base, 3, 1, RED);
    else if (H > 1) rect(X(i + k) - 1, base, 3, 1, '#30d000');
  }));
}
hist(424, [
  [33, LIME, '33 46 34 67 138 70 142 70 49 67 47 49 142 145 73 46 34 29 26 23 23 17 16 14 12 12 12 10 13 10 12 12 13 16 16 16 19 16 16 13 13 11 11 10 10 10 7 6'],
  [81, RED, '3 3 3 3 3 7 3 6 7 8 10 10 10 10 10 10 13 10 10 7 7 7 7 7 10 19 16 13 10 10 10 19 22 91 94 97 46 31 31 22 28 22 91 46 34 103 52 37 25 109 52 121 58 40 61 40 31 28 22 19 19 22 19 16 13 13 10 10 10 7 7 7 7 7 7 7 7 7 7 7 7 7 7 4 6 4 6 6 3 3 3 3 3 3 3 3 3 3 3 3 3 3 3 3 3 3 3 3 3 3 3 3 3 3 3 3 3'],
  [198, LIME, '6 6 6 16 40 28 85 85 46 46 28 22 22 16 16 13 13 10 22 88 43 91 94 49 49 54 34 88 40 34 31 46 34 30 22 19 19 16 13 16 13 13 13 13 10 16 16 13 16 16 16 16 91 46 31 25 19 22 19 16 10 10 7 10 10']
]);
hist(485, [
  [33, LIME, '20 28 22 16 66 34 66 31 21 16 16 16 42 48 27'],
  [48, RED, '9 9 9 12 12 9 24 27 21 27 30 25 54 33 27 45 34 27 21 18 16 24 21 21 33 21 18 123 58 34 19 90 81 72 39 27 90 108 117 51 57 39 132 147 159 72 72 45 72 129 63 45 21 15 15 15 12 30 75 42 21 12 12 9 27 18 72 81 90 39 24 27 12 18 15 66 36 27 96 54 36 24 108 57 129 57 36 54 33 24 18 12 9 9 12 9'],
  [144, LIME, '12 15 12 15 24 18 45 45 99 99 111 54 30 24 21 45 33 24 18 21 18 108 51 54 72 78 87 84 87 45 93 45 30 84 36 18 27 18 12'],
  [183, RED, '9 12 9 15 12 15 21 18 15 18 12 9'],
  [195, LIME, '24 18 12 12 12 12 54 63 33 75 84 45 45 24 18 18 12 12 9 9 6 18 90 42 87 96 51 51 48 33 69 36 27 15 30 18 15'],
  [232, RED, '9 9 15 12 17 54 66 36 72 36 21 15 12 12 9 9'],
  [248, LIME, '6 6 27 18 6 6 6'],
  [255, RED, '9 4 4 75 87 48 27 27']
]);
rect(5, 406, 1320, 1, '#000'); rect(5, 466, 1320, 1, '#000');
label(136, 382, 'ert [mobidik]ms-nrp 2.5532 0.3917');
label(136, 439, 'ert [mobidik]ms-nrp 0.2994 3.3400');
label(9, 618, 'RO');

// ratio line
const BLU = '#0000ff';
line(BLU, 2, 0, 345, '411,581 436,581 448,597 484,597 496,590 520,588 535,593 583,597 592,590 616,592 626,573 655,578 670,553 715,553 723,557 735,552 757,552 770,546 785,562 805,568 820,578 835,580 845,571 857,574 868,569 885,574 903,580 908,560 916,521 930,536 952,543 964,507 976,507 988,494 1000,508 1010,507 1018,495');
line(BLU, 2, 330, 365, '0,436 8,450 22,446 46,405 58,399 70,423 94,426 106,412 122,393 130,393 142,418 154,450 166,464 178,442 190,464 202,495 226,527 248,528 262,534 275,534 286,480 310,476 322,488 360,488 382,478 394,445 406,443 412,480 417,538 430,516 455,519 466,509 478,524 490,522 502,537 522,534 535,537 612,537 622,522 646,528 658,516 670,515 694,484 708,484 718,492 742,487 753,467 766,488 778,487 790,464 825,464 838,459 850,461 862,446 874,448 898,474 910,497 922,498 934,484 946,484 965,494 982,494 994,486 1006,486 1016,504 1030,503');
line(BLU, 2, 670, 365, '0,504 10,503 22,482 34,465 46,467 80,456 92,434 128,432 142,445 152,538 166,529 190,525 202,511 240,508 262,498 285,507 310,508 322,516 346,527 370,525 388,537 480,537 496,520 530,521 585,509 598,530 622,529 632,537 685,537 692,534 702,538 740,531 750,537 780,536 790,516 802,516 814,531 826,528 838,518 850,470 874,458 886,466 910,472 922,494 934,507 950,506 970,519 994,519 1010,507 1030,493 1050,495 1080,496 1092,493 1102,440 1126,434 1138,450 1150,450');
// momentum line
line(YEL, 2, 0, 345, '411,722 420,702 436,698 460,659 484,652 496,669 520,675 545,672 560,660 580,655 592,677 616,670 628,713 652,707 675,750 692,737 735,727 772,718 808,678 832,660 844,680 868,710 890,704 904,705 908,735 916,774 935,743 952,726 962,744 988,746');
line(YEL, 2, 330, 365, '-2,687 10,676 28,676 46,687 60,687 70,672 82,678 106,680 118,686 132,687 142,671 156,667 166,655 178,669 190,660 202,640 214,622 226,601 238,597 262,606 275,607 286,657 298,672 315,672 325,661 342,658 382,663 394,688 418,692 430,668 455,662 466,639 478,654 492,655 504,667 526,667 538,687 550,686 574,673 598,679 610,692 630,676 650,673 672,650 694,607 706,603 718,612 742,611 754,603 766,618 778,621 790,603 838,599 862,591 874,595 898,615 922,623 934,606 958,606 970,621 1006,608 1030,608');
line(YEL, 2, 670, 365, '0,609 10,608 22,585 34,560 46,572 70,587 104,590 154,603 190,626 204,657 222,671 264,679 286,662 310,656 346,603 358,606 370,618 390,605 408,602 418,578 432,572 478,585 502,607 545,614 574,633 586,645 600,620 610,609 622,624 634,597 660,603 680,601 706,609 742,627 754,611 770,616 780,630 790,684 802,684 814,656 826,645 838,663 850,708 865,708 886,681 910,672 934,638 946,635 970,614 994,609 1010,628 1050,657 1066,671 1084,675 1092,684 1102,704 1118,704 1140,684 1150,680');
// RO oscillator
line('#000', 1, 0, 345, '16,920 28,917 40,920 48,921 68,921 76,916 100,914 124,904 172,907 184,896 208,900 256,899 328,903 344,911 370,914 400,912 424,915 436,911 448,911 472,918 500,914 520,919 556,910 580,915 592,914 616,924 628,920 660,922 712,924 724,928 736,924 748,923 772,914 796,907 808,910 820,905 844,916 862,920 870,910 880,832 886,828 892,832 904,866 916,844 928,842 940,839 952,855 964,849 976,853 988,843');
line('#000', 1, 330, 365, '-2,783 10,781 22,789 34,794 46,790 58,778 68,784 82,779 106,789 118,784 154,764 166,771 190,758 214,749 238,747 262,750 274,772 290,772 320,762 360,762 370,764 384,778 406,775 418,763 430,766 455,760 478,767 510,771 526,779 550,775 590,776 598,786 610,776 622,777 646,768 670,757 694,748 750,745 756,757 770,752 790,745 880,751 900,765 905,806 910,843 922,838 958,843 1016,847 1020,845');
line('#000', 1, 670, 365, '0,844 22,835 60,838 75,835 85,838 105,835 150,849 190,868 202,870 265,870 310,863 346,856 358,859 394,853 410,832 435,831 455,826 490,841 520,843 545,850 575,853 590,844 615,845 625,841 660,848 665,845 715,859 762,859 790,868 826,862 840,880 850,885 862,870 910,862 922,853 934,856 955,848 983,847 994,769 1020,775 1050,773 1055,778 1068,774 1078,776 1090,802 1102,790 1126,781 1138,781');
['214,752 226,747 274,748','694,749 730,751 754,742','782,752 795,744 810,749 884,751'].forEach(s => line(BLU, 4, 330, 365, s));
['51,921 66,921','664,923 714,923','735,927 748,922'].forEach(s => line(YEL, 3, 0, 345, s));
['202,870 265,870 310,863','790,868 826,863 838,866 850,882 862,870 910,867'].forEach(s => line(YEL, 4, 670, 365, s));

// hand-drawn markers
[[961,152.500,20,20],[1050.500,183.500,23,16],[962.500,463.500,20,16],[1044.500,464.500,25,21]].forEach(([cx, cy, rx, ry]) =>
  el('ellipse', {cx, cy, rx, ry, fill: 'none', stroke: '#000', 'stroke-width': 5}));

// price scale
rect(1324, 178, 2, 1, INK);
label(1329, 179, '21336');
[[79,'22456'],[112,'22086'],[145,'21706'],[211,'20966'],[244,'20596'],[277,'20226'],[310,'19856'],[343,'19486']].forEach(([y, s]) => { rect(1324, y, 3, 1, INK); label(1329, y + .5, s); });
rect(1325, 170, 33, 11, INK); label(1329, 175.500, '21371', '#d3d3d3');
[[379.500,'42.3094'],[420.500,'-1.9887'],[424.500,'0.00'],[436.500,'19.8015'],[482.500,'-0.8874'],[486.500,'0.00'],[498.500,'4.7187'],[528.500,'1.5'],[538.500,'0'],[554.500,'108.9601'],[560.500,'80'],[584.500,'20'],[592.500,'0.00'],[592.500,'0'],[599.500,'-33.6131'],[615.500,'231.5022'],[617.500,'180'],[641.500,'0.00'],[652.500,'-80'],[655.500,'-150.8016']].forEach(([y, s]) => label(1327, y, s));
[374,425,431,487,493,544,549,592,605,610,641,660].forEach(y => rect(1324, y, 2, 1, INK));
rect(1325, 401, 12, 11, '#000'); label(1326, 406.500, '15', '#fff');
rect(1325, 461, 7, 11, '#000'); label(1326, 466.500, '7', '#fff');

// time scale
['27 Mar 2019','3 Apr 14:00','10 Apr 18:00','18 Apr 10:00','29 Apr 14:00','7 May 18:00','15 May 10:00','22 May 14:00','29 May 18:00','6 Jun 10:00','13 Jun 14:00','20 Jun 18:00','28 Jun 10:00','5 Jul 14:00','12 Jul 18:00','22 Jul 10:00','29 Jul 14:00'].forEach((s, k) => {
  rect(5 + 64 * k, 663, 1, 3, INK); label(4 + 64 * k, 671.500, s);
});
</script>
</body>
</html>
